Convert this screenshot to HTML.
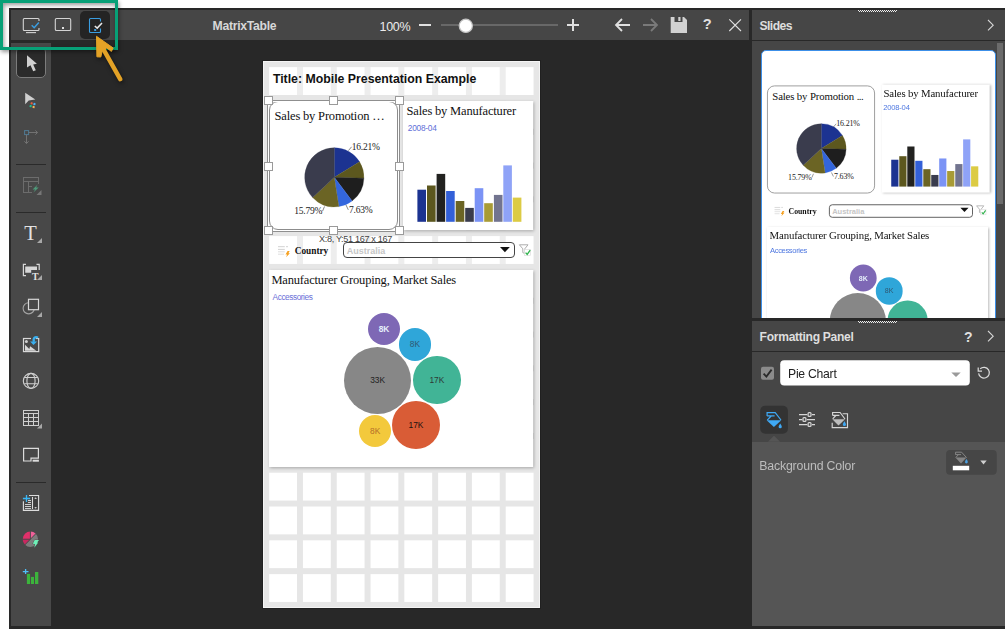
<!DOCTYPE html>
<html><head><meta charset="utf-8"><title>Mobile Presentation</title>
<style>
*{box-sizing:border-box;margin:0;padding:0}
html,body{width:1005px;height:629px;overflow:hidden;background:#fff}
body{position:relative;font-family:"Liberation Sans",sans-serif;}
.abs{position:absolute}
#app{position:absolute;left:9px;top:8px;width:996px;height:621px;background:#282828}
#topbar{position:absolute;left:11px;top:10px;width:738px;height:30px;background:#464646}
#ltool{position:absolute;left:11px;top:43px;width:40px;height:583px;background:#484848}
.sep{position:absolute;left:16px;width:30px;height:1px;background:#2a2a2a}
#rp-head{position:absolute;left:752px;top:10px;width:253px;height:30px;background:#464646}
#rp-slides{position:absolute;left:752px;top:41px;width:253px;height:277px;background:#464646;overflow:hidden}
#fp-head{position:absolute;left:752px;top:321px;width:253px;height:30px;background:#464646}
#fp-body{position:absolute;left:752px;top:352px;width:253px;height:90px;background:#464646}
#fp-low{position:absolute;left:752px;top:441.5px;width:253px;height:184px;background:#555}
.ptitle{position:absolute;color:#dedede;font-weight:bold;font-size:12.5px;line-height:16px;white-space:nowrap}
svg{position:absolute;overflow:visible}
.slide{position:absolute;width:277px;height:547px;transform-origin:0 0}
.serif{font-family:"Liberation Serif",serif}
.card{position:absolute;background:#fff}
.ct{position:absolute;font-family:"Liberation Serif",serif;font-size:12.5px;letter-spacing:-0.18px;line-height:15px;color:#111;white-space:nowrap}
.sub{position:absolute;font-size:8.3px;letter-spacing:-0.25px;line-height:10px;color:#5f6fd8;white-space:nowrap}
.pl{position:absolute;font-family:"Liberation Serif",serif;font-size:9.5px;letter-spacing:-0.2px;line-height:12px;color:#222;white-space:nowrap}
.bub{position:absolute;border-radius:50%;text-align:center;font-size:8.4px;white-space:nowrap}
.thumb .ct{font-size:12.9px;margin-left:0.7px}
.thumb .sub{font-size:9.1px;margin-top:-1.2px;color:#4f78e0 !important}
.hd{position:absolute;width:9px;height:9px;background:#fff;border:1px solid #9a9a9a}
#canvas{position:absolute;left:263px;top:61px;width:277.2px;height:547px;background-color:#e6e6e6;overflow:hidden;
 background-image:linear-gradient(90deg,#e6e6e6 5.8px,transparent 5.8px),linear-gradient(180deg,#e6e6e6 5.8px,transparent 5.8px),linear-gradient(#fff,#fff);
 background-size:33.8px 33.8px,33.8px 33.8px,100% 100%;background-position:0.2px 0.2px,0.2px 0.2px,0 0;
 box-shadow:0 0 0 1px #202020}
#canvas:after{content:"";position:absolute;left:0;top:0;right:0;bottom:0;box-shadow:inset 0 0 0 1px #f4f4f4;pointer-events:none}
</style></head><body>
<div id="app"></div>
<div id="topbar"></div>
<div id="ltool"></div>
<div id="rp-head"></div>
<div id="rp-slides">
 <div class="abs" style="left:9px;top:9px;width:234.6px;height:300px;background:#fff;border:1px solid #3c8fe8;border-radius:5px"></div>
 <div class="slide thumb" style="left:10.4px;top:10.8px;transform:scale(0.837)">
<div class="card" style="left:6px;top:40px;width:129px;height:129px;border:1px solid #8c8c8c;border-radius:9px"></div>
<div class="ct" style="left:11.6px;top:45.7px">Sales by Promotion <span style="letter-spacing:-0.6px">...</span></div>
<svg style="left:0;top:0" width="277" height="547"><path d="M70.90,115.20 L70.90,85.60 A29.6,29.6 0 0 1 96.14,99.73 Z" fill="#1c3391" stroke="#1c3391" stroke-width="0.3"/><path d="M70.90,115.20 L96.14,99.73 A29.6,29.6 0 0 1 100.49,116.08 Z" fill="#5c571e" stroke="#5c571e" stroke-width="0.3"/><path d="M70.90,115.20 L100.49,116.08 A29.6,29.6 0 0 1 88.71,138.84 Z" fill="#1e1e1e" stroke="#1e1e1e" stroke-width="0.3"/><path d="M70.90,115.20 L88.71,138.84 A29.6,29.6 0 0 1 75.43,144.45 Z" fill="#3366dd" stroke="#3366dd" stroke-width="0.3"/><path d="M70.90,115.20 L75.43,144.45 A29.6,29.6 0 0 1 49.25,135.39 Z" fill="#6b6424" stroke="#6b6424" stroke-width="0.3"/><path d="M70.90,115.20 L49.25,135.39 A29.6,29.6 0 0 1 70.90,85.60 Z" fill="#3a3c4d" stroke="#3a3c4d" stroke-width="0.3"/><g stroke="#555" stroke-width="0.7" fill="none"><path d="M85.4,89.6 L88.6,85.8"/><path d="M61.5,145.5 L59.6,150"/><path d="M83,144 L85.3,148.8"/></g></svg>
<div class="pl" style="left:88.7px;top:79.9px">16.21%</div>
<div class="pl" style="left:31.2px;top:143.5px">15.79%</div>
<div class="pl" style="left:86px;top:142.6px">7.63%</div>
<div class="card" style="left:142.5px;top:39.2px;width:129.4px;height:129px;box-shadow:1px 1px 3px rgba(0,0,0,.28)"></div>
<div class="ct" style="left:144.4px;top:43px">Sales by Manufacturer</div>
<div class="sub" style="left:144.8px;top:62.3px">2008-04</div>
<svg style="left:0;top:0" width="277" height="547"><rect x="154.4" y="128.7" width="8.6" height="32.1" fill="#1c3391"/><rect x="164" y="124.5" width="8.6" height="36.3" fill="#5c571e"/><rect x="173.6" y="112.9" width="8.6" height="47.9" fill="#222220"/><rect x="183.1" y="130" width="8.6" height="30.8" fill="#3360d8"/><rect x="192.7" y="140" width="8.6" height="20.8" fill="#6b6424"/><rect x="202.2" y="146.9" width="8.6" height="13.9" fill="#3a3c4d"/><rect x="211.7" y="127.2" width="8.6" height="33.6" fill="#7b93f5"/><rect x="221.2" y="142.2" width="8.6" height="18.6" fill="#a89b36"/><rect x="230.9" y="133.9" width="8.6" height="26.9" fill="#72748f"/><rect x="240.3" y="104.4" width="8.6" height="56.4" fill="#8fa3f7"/><rect x="249.8" y="136.6" width="8.6" height="24.2" fill="#dccb44"/></svg>
<div class="abs" style="left:6px;top:175px;width:264px;height:28px;background:rgba(255,255,255,.28)"></div>
<svg style="left:0;top:0" width="277" height="547"><g stroke="#cdcdcd" stroke-width="0.9" fill="none"><path d="M15,185.7H21.8M23,185.7H25M15,188.4H21.8"/><path d="M15,190.8H21.8M15,193.2H21" stroke="#dadada"/></g><path d="M24.6,190 L26.7,190 L25.4,192.2 L26.9,192.2 L23.1,196.3 L24.1,193.6 L22.5,193.6 Z" fill="#f5a020"/></svg>
<div class="abs serif" style="left:31.7px;top:184.2px;font-weight:bold;font-size:9.3px;line-height:12px;color:#111;white-space:nowrap">Country</div>
<div class="abs" style="left:80px;top:182.2px;width:172px;height:16.2px;border:1px solid #444;border-radius:4px;background:#fff"></div>
<div class="abs" style="left:83.8px;top:185.2px;font-weight:bold;font-size:9px;line-height:10px;color:#c6c6c6;white-space:nowrap">Australia</div>
<svg style="left:237.3px;top:186.4px" width="10" height="6"><path d="M0,0 H9.8 L4.9,5.2 Z" fill="#111"/></svg>
<svg style="left:255.5px;top:183px" width="13" height="13" viewBox="0 0 13 13"><path d="M0.4,0.8 H9 L5.8,4.8 V9.6 L3.8,8.6 V4.8 Z" fill="none" stroke="#a4a4a4" stroke-width="0.9"/><rect x="5.4" y="5.3" width="6.2" height="6.2" fill="#fff" stroke="#d8d8d8" stroke-width="0.6"/><path d="M6.6,8.6 L8.2,10.4 L11.2,6.2" fill="none" stroke="#2fb24c" stroke-width="1.3"/></svg>
<div class="card" style="left:6px;top:208.6px;width:264.3px;height:197.4px;box-shadow:1px 1px 3px rgba(0,0,0,.28)"></div>
<div class="ct" style="left:8.4px;top:212.1px">Manufacturer Grouping, Market Sales</div>
<div class="sub" style="left:9.6px;top:233.6px;color:#6a6fd8;letter-spacing:-0.45px">Accessories</div>
<div class="bub" style="left:104.9px;top:254.1px;width:32.2px;height:32.2px;line-height:32.8px;background:#7e68b5;color:#e4eefa;font-weight:bold;">8K</div>
<div class="bub" style="left:135.6px;top:269.2px;width:32.6px;height:32.6px;line-height:33.2px;background:#2fa6d9;color:#2f5872;">8K</div>
<div class="bub" style="left:81.1px;top:287.6px;width:67.0px;height:67.0px;line-height:67.6px;background:#878787;color:#222;"></div>
<div class="bub" style="left:150.2px;top:297.4px;width:47.4px;height:47.4px;line-height:48.0px;background:#41b496;color:#2e3a36;"></div>
<div class="bub" style="left:129.1px;top:342.0px;width:47.8px;height:47.8px;line-height:48.4px;background:#d95c36;color:#1a1210;"></div>
<div class="bub" style="left:96.0px;top:355.7px;width:32.2px;height:32.2px;line-height:32.8px;background:#f3c93c;color:#b56f2a;"></div>
</div>
 <div class="abs" style="left:245px;top:2px;width:6px;height:161px;background:#6b6b6b"></div>
</div>
<div id="fp-head"></div>
<div id="fp-body"></div>
<div id="fp-low"></div>

<div id="canvas">
<div class="abs" style="left:6px;top:6px;width:264px;height:28px;background:rgba(255,255,255,.28)"></div>
<div class="abs" style="left:9.9px;top:10px;font-weight:bold;font-size:12.3px;line-height:16px;color:#111;white-space:nowrap" id="ttl">Title: Mobile Presentation Example</div>
<div class="slide" style="left:0;top:0">
<div class="card" style="left:6px;top:40px;width:129px;height:129px;border:1px solid #8c8c8c;border-radius:9px"></div>
<div class="ct" style="left:11.6px;top:48.2px">Sales by Promotion …</div>
<svg style="left:0;top:0" width="277" height="547"><path d="M71.30,116.30 L71.30,86.70 A29.6,29.6 0 0 1 96.54,100.83 Z" fill="#1c3391" stroke="#1c3391" stroke-width="0.3"/><path d="M71.30,116.30 L96.54,100.83 A29.6,29.6 0 0 1 100.89,117.18 Z" fill="#5c571e" stroke="#5c571e" stroke-width="0.3"/><path d="M71.30,116.30 L100.89,117.18 A29.6,29.6 0 0 1 89.11,139.94 Z" fill="#1e1e1e" stroke="#1e1e1e" stroke-width="0.3"/><path d="M71.30,116.30 L89.11,139.94 A29.6,29.6 0 0 1 75.83,145.55 Z" fill="#3366dd" stroke="#3366dd" stroke-width="0.3"/><path d="M71.30,116.30 L75.83,145.55 A29.6,29.6 0 0 1 49.65,136.49 Z" fill="#6b6424" stroke="#6b6424" stroke-width="0.3"/><path d="M71.30,116.30 L49.65,136.49 A29.6,29.6 0 0 1 71.30,86.70 Z" fill="#3a3c4d" stroke="#3a3c4d" stroke-width="0.3"/><g stroke="#555" stroke-width="0.7" fill="none"><path d="M85.4,89.6 L88.6,85.8"/><path d="M61.5,145.5 L59.6,150"/><path d="M83,144 L85.3,148.8"/></g></svg>
<div class="pl" style="left:88.7px;top:79.9px">16.21%</div>
<div class="pl" style="left:31.2px;top:143.5px">15.79%</div>
<div class="pl" style="left:86px;top:142.6px">7.63%</div>
<div class="card" style="left:140.3px;top:40px;width:130px;height:129px;box-shadow:1px 1px 3px rgba(0,0,0,.28)"></div>
<div class="ct" style="left:143.6px;top:43px">Sales by Manufacturer</div>
<div class="sub" style="left:144.8px;top:62.3px">2008-04</div>
<svg style="left:0;top:0" width="277" height="547"><rect x="154.4" y="128.7" width="8.6" height="32.1" fill="#1c3391"/><rect x="164" y="124.5" width="8.6" height="36.3" fill="#5c571e"/><rect x="173.6" y="112.9" width="8.6" height="47.9" fill="#222220"/><rect x="183.1" y="130" width="8.6" height="30.8" fill="#3360d8"/><rect x="192.7" y="140" width="8.6" height="20.8" fill="#6b6424"/><rect x="202.2" y="146.9" width="8.6" height="13.9" fill="#3a3c4d"/><rect x="211.7" y="127.2" width="8.6" height="33.6" fill="#7b93f5"/><rect x="221.2" y="142.2" width="8.6" height="18.6" fill="#a89b36"/><rect x="230.9" y="133.9" width="8.6" height="26.9" fill="#72748f"/><rect x="240.3" y="104.4" width="8.6" height="56.4" fill="#8fa3f7"/><rect x="249.8" y="136.6" width="8.6" height="24.2" fill="#dccb44"/></svg>
<div class="abs" style="left:6px;top:175px;width:264px;height:28px;background:rgba(255,255,255,.28)"></div>
<svg style="left:0;top:0" width="277" height="547"><g stroke="#cdcdcd" stroke-width="0.9" fill="none"><path d="M15,185.7H21.8M23,185.7H25M15,188.4H21.8"/><path d="M15,190.8H21.8M15,193.2H21" stroke="#dadada"/></g><path d="M24.6,190 L26.7,190 L25.4,192.2 L26.9,192.2 L23.1,196.3 L24.1,193.6 L22.5,193.6 Z" fill="#f5a020"/></svg>
<div class="abs serif" style="left:31.7px;top:184.2px;font-weight:bold;font-size:9.3px;line-height:12px;color:#111;white-space:nowrap">Country</div>
<div class="abs" style="left:80px;top:181.4px;width:172px;height:15.6px;border:1px solid #444;border-radius:4px;background:#fff"></div>
<div class="abs" style="left:83.8px;top:185.2px;font-weight:bold;font-size:9px;line-height:10px;color:#c6c6c6;white-space:nowrap">Australia</div>
<svg style="left:237.3px;top:186.4px" width="10" height="6"><path d="M0,0 H9.8 L4.9,5.2 Z" fill="#111"/></svg>
<svg style="left:255.5px;top:183px" width="13" height="13" viewBox="0 0 13 13"><path d="M0.4,0.8 H9 L5.8,4.8 V9.6 L3.8,8.6 V4.8 Z" fill="none" stroke="#a4a4a4" stroke-width="0.9"/><rect x="5.4" y="5.3" width="6.2" height="6.2" fill="#fff" stroke="#d8d8d8" stroke-width="0.6"/><path d="M6.6,8.6 L8.2,10.4 L11.2,6.2" fill="none" stroke="#2fb24c" stroke-width="1.3"/></svg>
<div class="card" style="left:6px;top:208.6px;width:264.3px;height:197.4px;box-shadow:1px 1px 3px rgba(0,0,0,.28)"></div>
<div class="ct" style="left:8.4px;top:212.1px">Manufacturer Grouping, Market Sales</div>
<div class="sub" style="left:9.6px;top:230.7px;color:#6a6fd8;letter-spacing:-0.45px">Accessories</div>
<div class="bub" style="left:104.9px;top:252.1px;width:32.2px;height:32.2px;line-height:32.8px;background:#7e68b5;color:#e4eefa;font-weight:bold;">8K</div>
<div class="bub" style="left:135.6px;top:267.2px;width:32.6px;height:32.6px;line-height:33.2px;background:#2fa6d9;color:#2f5872;">8K</div>
<div class="bub" style="left:81.1px;top:285.6px;width:67.0px;height:67.0px;line-height:67.6px;background:#878787;color:#222;">33K</div>
<div class="bub" style="left:150.2px;top:295.4px;width:47.4px;height:47.4px;line-height:48.0px;background:#41b496;color:#2e3a36;">17K</div>
<div class="bub" style="left:129.1px;top:340.0px;width:47.8px;height:47.8px;line-height:48.4px;background:#d95c36;color:#1a1210;">17K</div>
<div class="bub" style="left:96.0px;top:353.7px;width:32.2px;height:32.2px;line-height:32.8px;background:#f3c93c;color:#b56f2a;">8K</div>
</div>
<div class="abs" style="left:4.3px;top:38.8px;width:132.4px;height:131.8px;border:1px solid #8f8f8f;box-shadow:0 0 0 1px #fff inset"></div>
<div class="abs" id="tip" style="left:56px;top:171.6px;font-size:9.1px;letter-spacing:-0.33px;line-height:12px;color:#444;white-space:nowrap">X:8, Y:51 167 x 167</div>
<div class="hd" style="left:0.7px;top:34.5px"></div>
<div class="hd" style="left:0.7px;top:100.5px"></div>
<div class="hd" style="left:0.7px;top:165.2px"></div>
<div class="hd" style="left:65.6px;top:34.5px"></div>
<div class="hd" style="left:65.6px;top:165.2px"></div>
<div class="hd" style="left:131.8px;top:34.5px"></div>
<div class="hd" style="left:131.8px;top:100.5px"></div>
<div class="hd" style="left:131.8px;top:165.2px"></div>
</div>
<div class="abs" style="left:80px;top:11px;width:30px;height:27.7px;background:#242424;border-radius:5px"></div>
<svg style="left:0;top:0" width="1005" height="45">
<g fill="none" stroke="#d4d4d4" stroke-width="1.1">
 <path d="M39,21 V19.5 Q39,18.5 38,18.5 H24.3 Q23.3,18.5 23.3,19.5 V29.5 Q23.3,30.5 24.3,30.5 H38 Q39,30.5 39,29.5 V28"/>
 <path d="M26,32.6 H36"/>
 <rect x="55.3" y="18.5" width="15.4" height="12" rx="1.3"/>
</g>
<path d="M31.7,25.3 L34.2,27.7 L38.8,22.6" fill="none" stroke="#3a9de0" stroke-width="1.5"/>
<rect x="62" y="27" width="2" height="2" fill="#e0e0e0"/>
<path d="M100.5,21.5 V19.5 Q100.5,18.5 99.5,18.5 H90.5 Q89.5,18.5 89.5,19.5 V31.5 Q89.5,32.5 90.5,32.5 H99.5 Q100.5,32.5 100.5,31.5 V28.5" fill="none" stroke="#3a9de0" stroke-width="1.1"/>
<rect x="94.2" y="29" width="2" height="2" fill="#3a9de0"/>
<path d="M94.8,26 L97.2,28.1 L102,23" fill="none" stroke="#e8e8e8" stroke-width="1.5"/>
<!-- zoom controls -->
<rect x="419" y="24" width="12" height="2" fill="#e0e0e0"/>
<rect x="441" y="24.5" width="117" height="1" fill="#8a8a8a"/>
<circle cx="465.8" cy="25.8" r="6.6" fill="#fff" stroke="#c4c4c4" stroke-width="1.2"/>
<path d="M567,25 H579 M573,19 V31" stroke="#e0e0e0" stroke-width="2" fill="none"/>
<path d="M616,25 H630 M622,19 L616,25 L622,31" stroke="#e0e0e0" stroke-width="1.8" fill="none"/>
<path d="M643,25 H657 M651,19 L657,25 L651,31" stroke="#7a7a7a" stroke-width="1.8" fill="none"/>
<path d="M670.7,17 H684 L687,20 V33 H670.7 Z" fill="#d2d2d2"/>
<rect x="674.5" y="17" width="8" height="5" fill="#464646"/>
<rect x="678.3" y="17" width="2.2" height="4" fill="#d2d2d2"/>
<path d="M729.3,19.3 L741,31 M741,19.3 L729.3,31" stroke="#e0e0e0" stroke-width="1.1" fill="none"/>
</svg>
<div class="ptitle" id="mt" style="left:212.5px;top:17.5px;font-size:12.2px;letter-spacing:-0.27px;color:#d8d8d8">MatrixTable</div>
<div class="abs" id="pct" style="left:379.5px;top:18.5px;font-size:12.5px;letter-spacing:-0.3px;line-height:16px;color:#ececec;white-space:nowrap">100%</div>
<div class="abs" id="q1" style="left:702.8px;top:16.1px;font-size:14.6px;font-weight:bold;line-height:16px;color:#e0e0e0">?</div>
<div class="abs" style="left:16px;top:47px;width:30px;height:31px;background:#2b2b2b;border:1px solid #7c7c7c;border-radius:5px"></div>
<div class="sep" style="top:164px"></div>
<div class="sep" style="top:212px"></div>
<div class="sep" style="top:482px"></div>
<svg style="left:0;top:0" width="60" height="629">
<!-- 1 pointer -->
<path d="M27,55.2 L27,67.4 L30.5,65.2 L33.2,71.3 L35.8,70.3 L33.2,64.5 L36.9,63.7 Z" fill="#d0d0d0"/>
<!-- 2 pointer with dots -->
<path d="M25.2,92.7 L25.2,104.3 L28.7,100.5 L35.3,99.6 Z" fill="#cfcfcf"/>
<g transform="rotate(14 32 105)">
<rect x="30.2" y="102.4" width="2.1" height="2.1" rx=".4" fill="#e8603c"/>
<rect x="33.1" y="102.4" width="2.1" height="2.1" rx=".4" fill="#4db2f5"/>
<rect x="29.9" y="105.4" width="2.1" height="2.1" rx=".4" fill="#1ec28f"/>
<rect x="33" y="105.5" width="2.1" height="2.1" rx=".4" fill="#f5b45a"/>
</g>
<!-- 3 connector dim -->
<rect x="24.6" y="130.6" width="4" height="4" fill="none" stroke="#4f7a94" stroke-width="1"/>
<g fill="none" stroke="#727272" stroke-width="1">
 <path d="M28.8,132.5 H37.4 M26.5,134.8 V143.4"/>
 <path d="M35.4,130.4 L37.6,132.5 L35.4,134.6 M24.4,141.3 L26.5,143.6 L28.6,141.3"/>
</g>
<!-- 4 table dim -->
<g fill="none" stroke="#6c6c6c" stroke-width="1">
 <rect x="23.5" y="177.5" width="15" height="15"/>
 <path d="M23.5,181.5 H38.5 M28.5,181.5 V192.5 M28.5,186.5 H33"/>
</g>
<rect x="32" y="184" width="8" height="10" fill="#484848"/>
<path d="M37.6,184.6 L32.6,189.4 H35.2 L33.4,192.6 L38.7,187.6 H36 Z" fill="#4f9a7a"/>
<path d="M41.5,195 V190 L36.5,195 Z" fill="#777"/>
<!-- 5 T -->
<path d="M42,243 V238 L37,243 Z" fill="#a8a8a8"/>
<!-- 6 dynamic text -->
<g fill="none" stroke="#d6d6d6" stroke-width="1.2">
 <path d="M26,264.4 H23.4 V275.6 H26 M36.5,264.4 H39.2 V270"/>
</g>
<path d="M25.2,266.6 H37 V270 H31.2 V272.8 H25.2 Z" fill="#d6d6d6"/>
<path d="M42,280 V275 L37,280 Z" fill="#a8a8a8"/>
<!-- 7 shapes -->
<circle cx="28.7" cy="308.3" r="5.6" fill="none" stroke="#a2a2a2" stroke-width="1.1"/>
<rect x="28.5" y="299.3" width="10" height="10.4" fill="#484848" stroke="#d8d8d8" stroke-width="1.2"/>
<path d="M42,317 V312 L37,317 Z" fill="#a8a8a8"/>
<!-- 8 image -->
<rect x="23.5" y="338.5" width="15.2" height="13.1" fill="none" stroke="#d8d8d8" stroke-width="1.2"/>
<path d="M25,344.7 L29.3,349 L30.1,346.3 L36.3,350.8 H25 Z" fill="#d8d8d8"/>
<circle cx="26.4" cy="341.6" r="1.5" fill="#d0d0d0"/>
<rect x="31" y="336" width="4.8" height="5" fill="#484848"/>
<path d="M30.1,341.4 H37.1 L33.5,345 Z" fill="#3ab0f0"/>
<path d="M33.9,341.8 C32.8,337.6 35.4,336.4 38,337.5" fill="none" stroke="#3ab0f0" stroke-width="2.3"/>
<!-- 9 globe -->
<g fill="none" stroke="#d0d0d0" stroke-width="1.1">
 <ellipse cx="31" cy="380.9" rx="7.7" ry="7.5"/>
 <ellipse cx="31" cy="380.9" rx="4.1" ry="7.5"/>
 <path d="M24.2,377.5 H37.8 M24.2,383.7 H37.8"/>
</g>
<!-- 10 grid -->
<g fill="none" stroke="#d0d0d0" stroke-width="1">
 <rect x="23.5" y="410.5" width="15" height="15"/>
 <path d="M23.5,413.5 H38.5 M23.5,417.5 H38.5 M23.5,421.5 H38.5 M28.5,413.5 V425.5 M33.5,413.5 V425.5"/>
</g>
<path d="M42,428.5 V423.5 L37,428.5 Z" fill="#a8a8a8"/>
<!-- 11 panel -->
<path d="M23.6,448.4 H38.4 V458.2 H31 V461 H23.6 Z" fill="none" stroke="#dcdcdc" stroke-width="1.2"/>
<rect x="32.6" y="459.7" width="6.3" height="2" fill="#dcdcdc"/>
<!-- 12 slicer -->
<rect x="33.8" y="498.6" width="3.6" height="8.8" fill="#3e3e3e"/>
<path d="M29,495.5 H38.6 V510.4 H23.4 V501.2" fill="none" stroke="#dcdcdc" stroke-width="1.1"/>
<path d="M32.5,497 V509" stroke="#dcdcdc" stroke-width="1"/>
<path d="M28,500.5 H31 M28,502.5 H31 M25,504.5 H31 M25,506.5 H31 M25,508.5 H31" stroke="#dcdcdc" stroke-width="0.9"/>
<path d="M34.3,498.9 L35.6,497.3 L36.9,498.9 Z M34.3,507.1 L35.6,508.8 L36.9,507.1 Z" fill="#c8c8c8"/>
<path d="M22.9,498.5 H30.1 M26.5,495 V502" stroke="#38b6f5" stroke-width="1.3"/>
<!-- 13 pie -->
<path d="M30.4,539.2 L35.8,533.7 A7.7,7.7 0 0 1 25,544.7 Z" fill="#7c7c7c"/>
<path d="M30.4,539.2 V531.5 A7.7,7.7 0 0 0 22.7,539.2 Z" fill="#e0306a"/>
<path d="M30.4,539.2 V531.5 A7.7,7.7 0 0 1 35.8,533.7 Z" fill="#f0609a"/>
<path d="M30.4,539.2 H22.7 A7.7,7.7 0 0 0 25,544.7 Z" fill="#c82860"/>
<path d="M30.4,531 V539.2 M22.2,539.2 H30.4 M24.6,545.1 L36.2,533.3" stroke="#484848" stroke-width="0.9" fill="none"/>
<path d="M34.7,540 L39,540 L37.1,542.5 L38.2,542.6 L34.3,547.7 L35.1,543.9 L32.8,543.7 Z" fill="#6ef0b8" stroke="#484848" stroke-width=".7" paint-order="stroke"/>
<!-- 14 bars -->
<rect x="26.9" y="573.9" width="3.2" height="10.1" fill="#3cb43c"/>
<rect x="31" y="576.9" width="3" height="7.1" fill="#3cb43c"/>
<rect x="35" y="572" width="3.3" height="12" fill="#3cb43c"/>
<path d="M22.8,571.6 H28.5 M25.6,568.9 V574.1" stroke="#50c0f8" stroke-width="1.3"/>
</svg>
<div class="abs serif" id="bigT" style="left:24.2px;top:221.4px;font-size:20.5px;line-height:24px;color:#e2e2e2">T</div>
<div class="abs serif" id="smT" style="left:31.9px;top:271.6px;font-weight:bold;font-size:9.8px;line-height:10px;color:#e2e2e2">T</div>
<div class="ptitle" id="sl" style="left:759.4px;top:17.5px;font-size:12.2px;letter-spacing:-0.55px">Slides</div>
<div class="ptitle" id="fpt" style="left:759.6px;top:328.7px;font-size:12.1px;letter-spacing:-0.3px">Formatting Panel</div>
<div class="abs" id="q2" style="left:964px;top:328.6px;font-size:14px;font-weight:bold;line-height:16px;color:#e0e0e0">?</div>
<svg style="left:0;top:0" width="1005" height="629"><g stroke="#f0f0f0" stroke-width="1" shape-rendering="crispEdges" fill="none"><path d="M858,10.5 H898" stroke-dasharray="1 1"/><path d="M859,11.5 H897" stroke-dasharray="1 1"/></g><g stroke="#f0f0f0" stroke-width="1" shape-rendering="crispEdges" fill="none"><path d="M858,321.5 H898" stroke-dasharray="1 1"/><path d="M859,322.5 H897" stroke-dasharray="1 1"/></g>
<path d="M988,20 L993.2,25.2 L988,30.4" fill="none" stroke="#d6d6d6" stroke-width="1.1"/>
<path d="M988,331 L993.2,336.2 L988,341.4" fill="none" stroke="#d6d6d6" stroke-width="1.1"/>
<!-- checkbox -->
<rect x="761" y="366.8" width="13" height="13" rx="2" fill="#8b8b8b"/>
<path d="M763.6,373.6 L766.4,376.6 L771.6,369.6" fill="none" stroke="#2a2a2a" stroke-width="1.8"/>
<!-- select -->
<rect x="780.2" y="360.2" width="189.6" height="25.4" rx="4" fill="#fff"/>
<path d="M951.3,372.4 H960.7 L956,377 Z" fill="#9a9a9a"/>
<!-- reset -->
<path d="M980.2,368.8 A5.4,5.4 0 1 1 978.6,373.4" fill="none" stroke="#dcdcdc" stroke-width="1.2"/>
<path d="M978.2,367.4 V371.2 H982" fill="none" stroke="#dcdcdc" stroke-width="1.2"/>
<!-- tabs -->
<rect x="760.2" y="405.7" width="27.7" height="28" rx="5" fill="#333"/>
<path d="M768,441.7 L774,435.8 L780,441.7 Z" fill="#555"/>
<!-- bucket blue -->
<g fill="none" stroke="#3fa9f5" stroke-width="1.2">
 <path d="M767.1,416 V412.6 H775.2 L781,420"/>
 <path d="M767.1,415.9 H774.6 M771.2,416 L767.2,420.2"/>
</g>
<path d="M766.6,420.2 H781.3 L773.9,427 Z" fill="#3fa9f5"/>
<path d="M780.2,423.6 Q781.9,426 781.8,426.7 A1.6,1.6 0 0 1 778.6,426.7 Q778.6,426 780.2,423.6 Z" fill="#3fa9f5"/>
<!-- sliders -->
<g stroke="#d6d6d6" stroke-width="1.25" fill="none">
 <path d="M799,414.5 H807.3 M812,414.5 H815 M799,419.5 H802.2 M806.8,419.5 H815 M799,424.5 H807.3 M812,424.5 H815"/>
 <rect x="808.1" y="412.6" width="2.9" height="3.8" rx=".9"/><rect x="803" y="417.6" width="2.9" height="3.8" rx=".9"/><rect x="808.1" y="422.6" width="2.9" height="3.8" rx=".9"/>
</g>
<!-- bucket with frame -->
<g fill="none" stroke="#d6d6d6" stroke-width="1.15">
 <path d="M842.6,413.7 H847.5 V427.6 H832.2 V422.8"/>
 <path d="M832.6,415.5 V412.5 H840.1 L845,419"/>
 <path d="M832.6,415.4 H839.4 M835.8,415.5 L832.7,418.9"/>
</g>
<path d="M832.3,419.2 H845 L838.5,425.5 Z" fill="#bdbdbd"/>
<path d="M844.4,421.3 Q846.1,423.8 846,424.5 A1.6,1.6 0 0 1 842.8,424.5 Q842.8,423.8 844.4,421.3 Z" fill="#3fa9f5"/>
<!-- color btn -->
<rect x="946.1" y="450" width="50.6" height="24.8" rx="4" fill="#464646"/>
<rect x="952.8" y="465.8" width="16.4" height="4.5" fill="#fff"/>
<g fill="none" stroke="#8c8c8c" stroke-width="0.9">
 <path d="M955.6,454.7 V452.2 H961.6 L966.6,457.7"/>
 <path d="M955.6,454.6 H961 M958.4,454.7 L955.8,457.5"/>
</g>
<path d="M955.4,457.6 H966.4 L961,463.4 Z" fill="#858585"/>
<path d="M966.4,459 Q968,461.2 967.8,462 A1.4,1.4 0 0 1 965,462 Q965,461.2 966.4,459 Z" fill="#4a9fe0"/>
<path d="M980.3,460.6 H986.7 L983.5,464.4 Z" fill="#d0d0d0"/>
</svg>
<div class="abs" id="pc" style="letter-spacing:-0.25px;left:788px;top:365.6px;font-size:12.2px;line-height:16px;color:#222;white-space:nowrap">Pie Chart</div>
<div class="abs" id="bgc" style="letter-spacing:-0.15px;left:759.2px;top:457.8px;font-size:12.3px;line-height:16px;color:#bdbdbd;white-space:nowrap">Background Color</div>
<div class="abs" style="left:-0.4px;top:-0.2px;width:118.6px;height:50.4px;border:3.3px solid #07a077;box-shadow:1px 2px 4px rgba(0,0,0,.4), inset 1px 2px 4px rgba(0,0,0,.4)"></div>
<svg style="left:0;top:0;filter:drop-shadow(1px 2px 2px rgba(0,0,0,.5))" width="160" height="110">
<path d="M120.2,79.2 L103.6,49.6" stroke="#e3a226" stroke-width="4.4" stroke-linecap="round" fill="none"/>
<path d="M96.5,36.3 L96.9,56.8 L100.8,57 L102.4,50.2 L106.8,48 L111.4,51.4 L113.2,48 Z" fill="#e3a226" stroke="#e3a226" stroke-width="1" stroke-linejoin="round"/>
</svg>
</body></html>
